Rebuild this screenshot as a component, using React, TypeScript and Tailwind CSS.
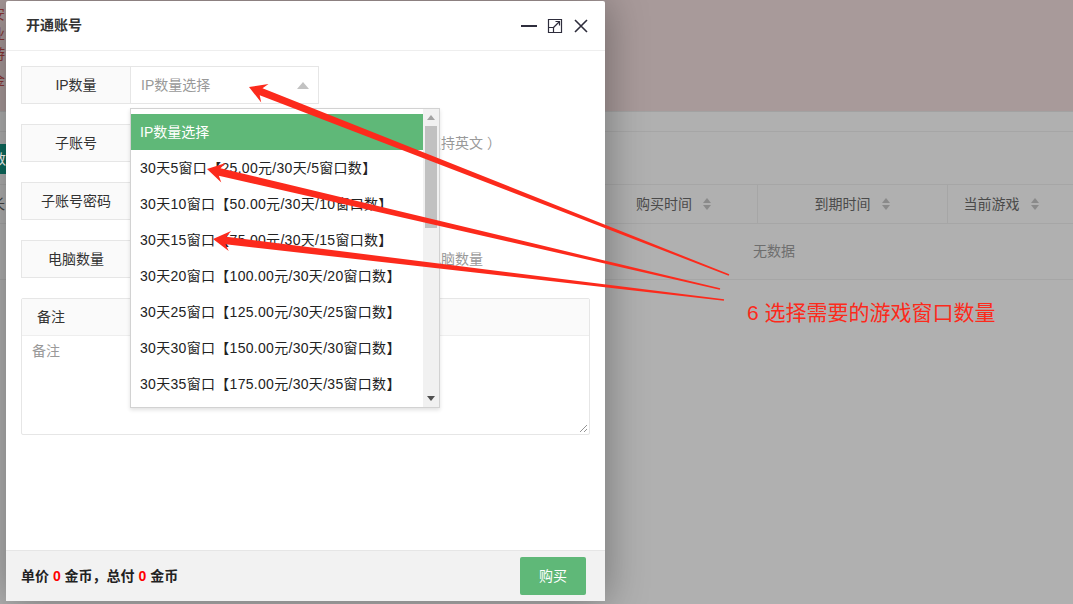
import React from "react";

const FONT = "font-['Liberation_Sans','Noto_Sans_CJK_SC',sans-serif]";

function arrowPts(tx: number, ty: number, ex: number, ey: number) {
  const dx = ex - tx;
  const dy = ey - ty;
  const L = Math.hypot(dx, dy);
  const ux = dx / L;
  const uy = dy / L;
  const nx = -uy;
  const ny = ux;
  const p = (a: number, b: number) =>
    `${(tx + ux * a + nx * b).toFixed(1)},${(ty + uy * a + ny * b).toFixed(1)}`;
  return [
    p(0, 0),
    p(17, 10),
    p(13, 3.8),
    `${(ex + nx * 0.7).toFixed(1)},${(ey + ny * 0.7).toFixed(1)}`,
    `${(ex - nx * 0.7).toFixed(1)},${(ey - ny * 0.7).toFixed(1)}`,
    p(13, -3.8),
    p(17, -10),
  ].join(" ");
}

function SortIcon() {
  return (
    <svg width="10" height="14" viewBox="0 0 10 14" className="ml-[10px]">
      <path d="M5 1 L9 6 L1 6 Z" fill="#8a8a8a" />
      <path d="M1 8 L9 8 L5 13 Z" fill="#8a8a8a" />
    </svg>
  );
}

const options = [
  "30天5窗口【25.00元/30天/5窗口数】",
  "30天10窗口【50.00元/30天/10窗口数】",
  "30天15窗口【75.00元/30天/15窗口数】",
  "30天20窗口【100.00元/30天/20窗口数】",
  "30天25窗口【125.00元/30天/25窗口数】",
  "30天30窗口【150.00元/30天/30窗口数】",
  "30天35窗口【175.00元/30天/35窗口数】",
  "30天40窗口【200.00元/30天/40窗口数】",
];

function Label({ children }: { children: React.ReactNode }) {
  return (
    <div className="w-[110px] h-[38px] border border-[#e6e6e6] bg-[#fafafa] flex items-center justify-center text-[14px] text-[#333] shrink-0">
      {children}
    </div>
  );
}

export default function App() {
  return (
    <div className={`relative w-[1073px] h-[604px] overflow-hidden bg-[#b0b0b0] ${FONT}`}>
      {/* background page (shaded) */}
      <div className="h-[112px] bg-[#a89a9a] border-b border-[#a2a2a2] flex flex-col pt-[4px] text-[14px] text-[#8a3535] leading-[20px] -ml-[9px]">
        <div>安</div>
        <div>业</div>
        <div>游</div>
        <div className="mt-[6px]">金</div>
      </div>
      <div className="h-[20px] border-b border-[#a6a6a6]" />
      <div className="h-[53px] border-b border-[#a6a6a6] flex items-start pt-[12px]">
        <div className="-ml-[10px] w-[16px] h-[30px] bg-[#0d6b5e] text-white text-[14px] leading-[30px] text-right">数</div>
      </div>
      <div className="h-[39px] border-b border-[#a6a6a6] flex items-center text-[14px] text-[#4a4a4a]">
        <div className="w-[591px] h-full flex items-center">
          <span className="-ml-[9px] text-[#444]">长</span>
        </div>
        <div className="w-[166px] h-full flex items-center justify-center">
          购买时间
          <SortIcon />
        </div>
        <div className="w-[190px] h-full border-l border-[#a6a6a6] flex items-center justify-center">
          到期时间
          <SortIcon />
        </div>
        <div className="w-[108px] h-full border-l border-[#a6a6a6] flex items-center justify-center">
          当前游戏
          <SortIcon />
        </div>
        <div className="flex-1 h-full" />
      </div>
      <div className="h-[56px] border-b border-[#a6a6a6] flex items-center text-[14px] text-[#6e6e6e]">
        <span className="ml-[753px]">无数据</span>
      </div>

      {/* modal window */}
      <div className="absolute left-[6px] top-[1px] w-[599px] h-[600px] bg-white rounded-[2px] shadow-[1px_1px_40px_rgba(0,0,0,0.35)] flex flex-col">
        <div className="h-[50px] shrink-0 border-b border-[#eee] flex items-center pl-[20px] pr-[16px]">
          <span className="text-[14px] text-[#333] font-bold">开通账号</span>
          <div className="ml-auto flex items-center gap-[10px]">
            <svg width="16" height="16" viewBox="0 0 16 16">
              <rect x="0" y="7" width="16" height="2" fill="#2e2d3c" />
            </svg>
            <svg width="16" height="16" viewBox="0 0 16 16">
              <path d="M1.5 1.5 H14.5 V14.5 H1.5 Z" fill="none" stroke="#2e2d3c" strokeWidth="1.2" />
              <path d="M1.5 9.5 H6.5 V14.5" fill="none" stroke="#2e2d3c" strokeWidth="1.2" />
              <path d="M6.5 9.5 L12.5 3.5 M8.5 3.5 H12.5 V7.5" fill="none" stroke="#2e2d3c" strokeWidth="1.2" />
            </svg>
            <svg width="16" height="16" viewBox="0 0 16 16">
              <path d="M2 2 L14 14 M14 2 L2 14" stroke="#2e2d3c" strokeWidth="1.6" />
            </svg>
          </div>
        </div>

        <div className="flex-1 px-[15px] pt-[15px]">
          {/* row 1 */}
          <div className="flex h-[38px] mb-[20px]">
            <Label>IP数量</Label>
            <div className="relative w-[188px] h-[38px] border border-l-0 border-[#e6e6e6] bg-white flex items-center pl-[10px] text-[14px] text-[#999]">
              IP数量选择
              <svg width="12" height="7" viewBox="0 0 12 7" className="absolute right-[9px] top-[15px]">
                <path d="M6 0 L12 7 L0 7 Z" fill="#c2c2c2" />
              </svg>
              {/* dropdown */}
              <div className="absolute left-[-1px] top-[41px] w-[310px] h-[300px] border border-[#d2d2d2] bg-white shadow-[0_2px_4px_rgba(0,0,0,0.12)] z-10 flex">
                <div className="flex-1 pt-[5px] overflow-hidden">
                  <div className="h-[36px] bg-[#5fb878] text-white text-[14px] leading-[36px] pl-[9px]">IP数量选择</div>
                  {options.map((o) => (
                    <div key={o} className="h-[36px] text-[14px] leading-[36px] pl-[9px] text-[#222] whitespace-nowrap tracking-[0.3px]">
                      {o}
                    </div>
                  ))}
                </div>
                <div className="w-[16px] bg-[#f1f1f1] flex flex-col items-center">
                  <svg width="8" height="5" viewBox="0 0 8 5" className="mt-[6px]">
                    <path d="M4 0 L8 5 L0 5 Z" fill="#a3a3a3" />
                  </svg>
                  <div className="mt-[6px] w-[12px] h-[102px] bg-[#c1c1c1]" />
                  <svg width="8" height="5" viewBox="0 0 8 5" className="mt-auto mb-[6px]">
                    <path d="M0 0 L8 0 L4 5 Z" fill="#505050" />
                  </svg>
                </div>
              </div>
            </div>
          </div>
          {/* row 2 */}
          <div className="flex h-[38px] mb-[20px] items-center">
            <Label>子账号</Label>
            <div className="w-[188px] h-[38px] border border-l-0 border-[#e6e6e6] bg-white" />
            <span className="ml-[80px] text-[14px] text-[#999] whitespace-pre">（仅支持英文 ）</span>
          </div>
          {/* row 3 */}
          <div className="flex h-[38px] mb-[20px] items-center">
            <Label>子账号密码</Label>
            <div className="w-[188px] h-[38px] border border-l-0 border-[#e6e6e6] bg-white" />
          </div>
          {/* row 4 */}
          <div className="flex h-[38px] mb-[20px] items-center">
            <Label>电脑数量</Label>
            <div className="w-[188px] h-[38px] border border-l-0 border-[#e6e6e6] bg-white" />
            <span className="ml-[108px] text-[14px] text-[#999] whitespace-nowrap">电脑数量</span>
          </div>
          {/* remark */}
          <div className="border border-[#e6e6e6] rounded-[2px]">
            <div className="h-[37px] bg-[#fafafa] border-b border-[#eee] flex items-center pl-[15px] text-[14px] text-[#333]">备注</div>
            <div className="relative h-[98px] pl-[10px] pt-[5px] text-[14px] text-[#999]">
              备注
              <svg width="8" height="8" viewBox="0 0 8 8" className="absolute right-[2px] bottom-[2px]">
                <path d="M8 1 L1 8 M8 5 L5 8" stroke="#888" strokeWidth="0.9" />
              </svg>
            </div>
          </div>
        </div>

        <div className="h-[51px] shrink-0 bg-[#f2f2f2] border-t border-[#e6e6e6] flex items-center pl-[15px] pr-[19px]">
          <span className="text-[14px] font-bold text-[#222] whitespace-pre">
            单价 <span className="text-[#f00]">0</span> 金币，总付 <span className="text-[#f00]">0</span> 金币
          </span>
          <button className="ml-auto w-[66px] h-[38px] bg-[#5fb878] text-white text-[14px] rounded-[2px]">购买</button>
        </div>
      </div>

      {/* annotation layer */}
      <svg className="absolute inset-0 z-20 pointer-events-none" width="1073" height="604" viewBox="0 0 1073 604">
        <polygon points={arrowPts(249, 87, 729, 275)} fill="#fc2a1c" />
        <polygon points={arrowPts(207, 169, 720, 289)} fill="#fc2a1c" />
        <polygon points={arrowPts(213, 239, 724, 300)} fill="#fc2a1c" />
      </svg>
      <div className="absolute left-[747px] top-[300px] z-20 text-[21px] leading-[26px] text-[#fc2a1c] whitespace-nowrap">
        6 选择需要的游戏窗口数量
      </div>
    </div>
  );
}
